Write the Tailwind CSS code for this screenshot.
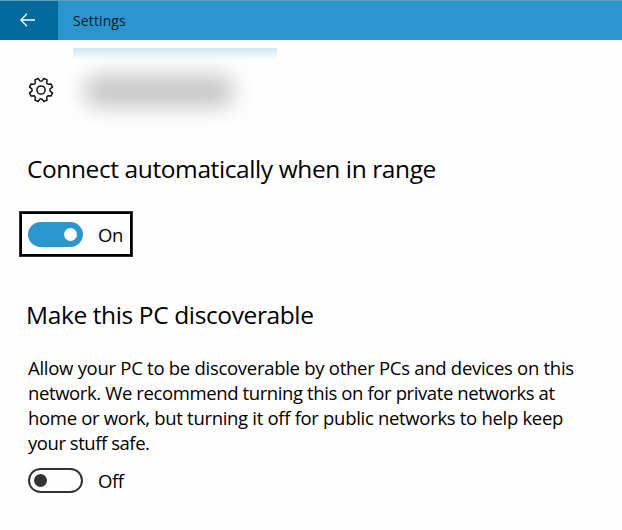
<!DOCTYPE html>
<html lang="en">
<head>
  <meta charset="UTF-8">
  <title>Settings</title>
  <script src="https://cdn.jsdelivr.net/npm/@tailwindcss/browser@4"></script>
</head>
<body class="bg-[#fefefe] text-black font-['Open_Sans','Noto_Sans',sans-serif] overflow-hidden">
  <div class="w-[622px] h-[530px] flex flex-col overflow-hidden">
    <header class="h-10 shrink-0 flex bg-[#2b96cd] border-t border-[#5f9dba]">
      <button class="w-[58px] h-full bg-[#006a9d] flex items-center pl-5 pb-px" aria-label="Back">
        <svg class="w-4 h-4" viewBox="0 0 16 16" fill="none" stroke="white" stroke-width="1.3">
          <path d="M15 8H1M7 1.8L.9 8L7 14.2"/>
        </svg>
      </button>
      <h1 class="pl-[15px] text-[14px] leading-[39px] tracking-[0.12px] whitespace-nowrap text-[#0a1a24]">Settings</h1>
    </header>

    <main class="flex flex-col pl-[27px]">
      <div class="flex h-[82px] pt-2">
        <svg class="w-7 h-7 mt-[28px] ml-[0.4px] shrink-0" viewBox="-14 -14 28 28" fill="none" stroke="#111" stroke-width="1.5" stroke-linejoin="round">
          <circle r="4.1"/>
          <path d="M11.45 2.85L10.11 6.08L7.25 5.66Q6.1 6.1 5.66 7.25L6.08 10.11L2.85 11.45L1.12 9.13Q0 8.6 -1.12 9.13L-2.85 11.45L-6.08 10.11L-5.66 7.25Q-6.1 6.1 -7.25 5.66L-10.11 6.08L-11.45 2.85L-9.13 1.12Q-8.6 0 -9.13 -1.12L-11.45 -2.85L-10.11 -6.08L-7.25 -5.66Q-6.1 -6.1 -5.66 -7.25L-6.08 -10.11L-2.85 -11.45L-1.12 -9.13Q0 -8.6 1.12 -9.13L2.85 -11.45L6.08 -10.11L5.66 -7.25Q6.1 -6.1 7.25 -5.66L10.11 -6.08L11.45 -2.85L9.13 -1.12Q8.6 0 9.13 1.12Z"/>
        </svg>
        <!-- network name, blurred out -->
        <div class="ml-[17.6px] w-[204px] h-[82px] shrink-0 bg-linear-to-b from-[#cfe7f4] to-transparent to-[12px]">
          <div class="ml-[12px] mt-[28px] w-[148px] h-[30px] bg-[#c2c2c2] rounded-xl blur-[11px]"></div>
        </div>
      </div>

      <h2 class="mt-[29px] h-9 text-[24.5px] leading-9 whitespace-nowrap tracking-[-0.4px]">Connect automatically when in range</h2>

      <div class="-ml-2 mt-[24px] w-[114px] h-[46px] border-3 border-black outline-1 -outline-offset-1 outline-[#333] flex items-center pl-[6px]">
        <span class="w-[55px] h-[25px] shrink-0 rounded-full bg-[#2b96cd] flex items-center justify-end pr-[6px]">
          <span class="w-[13px] h-[13px] rounded-full bg-white"></span>
        </span>
        <span class="ml-[15px] mt-[2px] text-[18.5px] leading-6 tracking-[-0.5px]">On</span>
      </div>

      <h2 class="mt-[40px] h-9 -ml-px text-[24.5px] leading-9 whitespace-nowrap tracking-[-0.38px]">Make this PC discoverable</h2>

      <p class="mt-[22px] ml-px text-[18.5px] leading-[25px] whitespace-nowrap">
        <span class="block tracking-[-0.28px]">Allow your PC to be discoverable by other PCs and devices on this</span>
        <span class="block tracking-[-0.39px]">network. We recommend turning this on for private networks at</span>
        <span class="block tracking-[-0.31px]">home or work, but turning it off for public networks to help keep</span>
        <span class="block tracking-[-0.45px]">your stuff safe.</span>
      </p>

      <div class="mt-[13px] ml-px flex items-center h-[25px]">
        <span class="w-[55px] h-[25px] shrink-0 rounded-full border-2 border-[#333] flex items-center pl-1">
          <span class="w-[13px] h-[13px] rounded-full bg-[#333]"></span>
        </span>
        <span class="ml-[15px] text-[18.5px] leading-6 tracking-[-0.4px]">Off</span>
      </div>
    </main>
  </div>
</body>
</html>
